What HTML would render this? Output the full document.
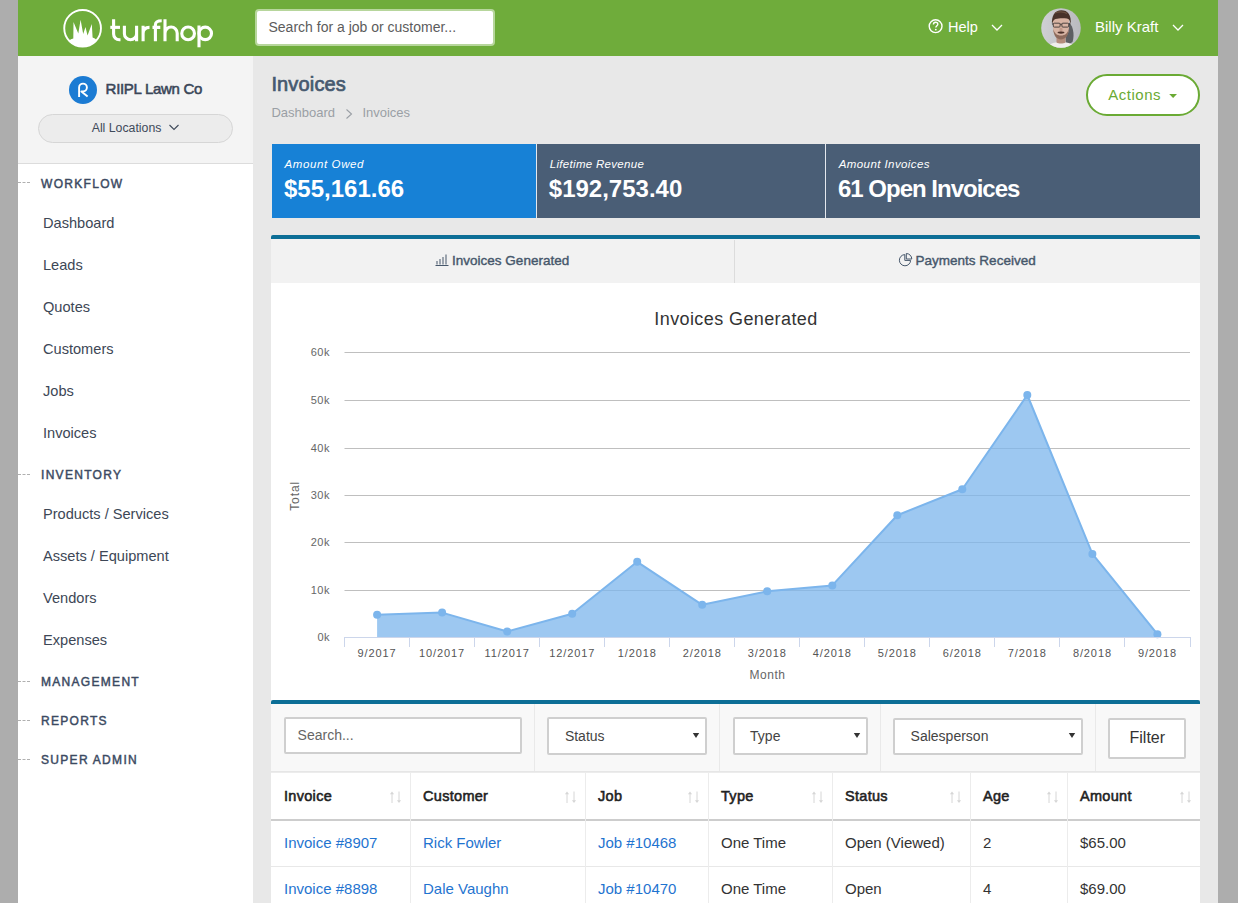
<!DOCTYPE html>
<html><head><meta charset="utf-8">
<style>
*{box-sizing:border-box;margin:0;padding:0}
html,body{width:1238px;height:903px;overflow:hidden;background:#adadad;font-family:"Liberation Sans",sans-serif}
.a{position:absolute;white-space:nowrap;line-height:1}
#hdr{position:absolute;left:18px;top:0;width:1200px;height:56px;background:#6fac3b}
#side{position:absolute;left:18px;top:56px;width:235px;height:847px;background:#fff}
#sidetop{position:absolute;left:18px;top:56px;width:235px;height:108px;background:#f4f4f4;border-bottom:1px solid #dcdcdc}
#main{position:absolute;left:253px;top:56px;width:965px;height:847px;background:#e8e8e8}
.nav{position:absolute;left:43px;font-size:14.6px;color:#3d4756}
.sec{position:absolute;left:41px;font-size:12px;font-weight:normal;letter-spacing:1.3px;color:#3b4a62;-webkit-text-stroke:0.45px #3b4a62}
.dash{position:absolute;left:18px;width:12px;height:1px;border-top:1px dashed #b0b0b0}
</style></head><body>
<!-- header -->
<div id="hdr"></div>
<svg class="a" style="left:60px;top:5px" width="46" height="46" viewBox="0 0 46 46">
 <circle cx="22.6" cy="23.3" r="18.35" fill="none" stroke="#fff" stroke-width="1.9"/>
 <clipPath id="lgc"><circle cx="22.6" cy="23.3" r="18.6"/></clipPath><path clip-path="url(#lgc)" d="M8.5 36.2 Q11 33.5 13.3 33.4 L13.5 17 L18.3 28.5 L20.6 14.8 L23.2 29 L25.5 21.9 L27.5 30.6 L31.8 19.1 L32.6 32.6 Q35 33 37 35.6 L40 46 L5 46 Z" fill="#fff"/>
</svg>
<svg class="a" style="left:0;top:0" width="230" height="56" viewBox="0 0 230 56">
 <g fill="none" stroke="#fff" stroke-width="3.1">
  <path d="M113.6 19.2 V34 A5.75 5.75 0 0 0 119.35 39.75 H120.5"/>
  <path d="M110.3 27.35 H120"/>
  <path d="M124.4 25.8 V33.65 A6.1 6.1 0 0 0 136.6 33.65 M136.6 25.8 V41.3"/>
  <path d="M143.1 41.3 V25.8 M143.1 33.5 C143.1 29.5 145.5 27.35 149.5 27.35"/>
  <path d="M155.4 41.3 V25 C155.4 21.5 157.5 20.75 161.7 20.75 M152.5 27.35 H160.3"/>
  <path d="M165 19.2 V41.3 M165 33.15 A6.1 6.1 0 0 1 177.2 33.15 V41.3"/>
  <circle cx="188.1" cy="33.4" r="6.35"/>
  <path d="M199 25.5 V47.3"/>
  <circle cx="205.25" cy="33.4" r="6.25"/>
 </g>
</svg>
<div class="a" style="left:255px;top:9px;width:240px;height:37px;background:#fff;border:2px solid #b7d69c;border-radius:4px"></div>
<div class="a" style="left:268.5px;top:20.2px;font-size:14px;color:#5c5c5c">Search for a job or customer...</div>
<svg class="a" style="left:926px;top:17px" width="20" height="20" viewBox="0 0 20 20">
 <circle cx="9.6" cy="9.2" r="6.4" fill="none" stroke="#fff" stroke-width="1.4"/>
 <path d="M7.4 7.6 C7.4 5.9 8.4 5.2 9.6 5.2 C10.9 5.2 11.8 6 11.8 7.2 C11.8 8.6 9.8 8.9 9.8 10.6" fill="none" stroke="#fff" stroke-width="1.4"/>
 <circle cx="9.8" cy="12.6" r="0.9" fill="#fff"/>
</svg>
<div class="a" style="left:948px;top:19.6px;font-size:14.5px;color:#fff">Help</div>
<svg class="a" style="left:990px;top:22px" width="14" height="10" viewBox="0 0 14 10"><path d="M2 3 L7 8 L12 3" fill="none" stroke="#fff" stroke-width="1.3"/></svg>
<svg class="a" style="left:1041px;top:8px" width="40" height="40" viewBox="0 0 40 40">
 <defs><clipPath id="cav"><circle cx="20" cy="20" r="19.8"/></clipPath><filter id="bl" x="-20%" y="-20%" width="140%" height="140%"><feGaussianBlur stdDeviation="0.45"/></filter>
 <linearGradient id="abg" x1="0" y1="0" x2="1" y2="0"><stop offset="0" stop-color="#cfd0d4"/><stop offset="1" stop-color="#b9babf"/></linearGradient></defs>
 <g clip-path="url(#cav)">
  <rect width="40" height="40" fill="url(#abg)"/>
  <g filter="url(#bl)">
   <path d="M26 13 C32 16 34 26 31.5 34 L25 38 L24 18 Z" fill="#5d5e63"/>
   <path d="M5 42 C7 36 12 34 20 34 C28 34 33 36 35 42 Z" fill="#f0eeec"/>
   <path d="M15.5 27 L15.5 34.5 C17.5 35.8 22.5 35.8 24.5 34.5 L24.5 27 Z" fill="#b48c7c"/>
   <ellipse cx="20" cy="19.8" rx="8" ry="11.2" fill="#d8b4a4"/><rect x="12" y="9" width="16" height="11" rx="3" fill="#d8b4a4"/>
   <path d="M12.3 21 C12.5 28 16 31.5 20 31.5 C24 31.5 27.5 28 27.7 21 C26.5 25.5 24 27.5 20 27.5 C16 27.5 13.5 25.5 12.3 21 Z" fill="#8d6b5c"/>
   <path d="M11 17 C10.2 7.5 14 2.2 20.3 2.2 C26.8 2.2 30.5 6.5 29.8 17 C29.2 13 28.2 11 25.8 10.6 C22 10 17.5 10.3 14.5 11 C12.5 11.6 11.6 13.8 11 17 Z" fill="#46322a"/>
   <path d="M14 5 C17 3.5 23 3.5 26 5.5" stroke="#6a5040" stroke-width="1.2" fill="none"/>
   <ellipse cx="20" cy="21.8" rx="1.6" ry="2.3" fill="#c19a8a"/>
   <ellipse cx="20" cy="24.6" rx="3.4" ry="1.1" fill="#4d322c"/>
  </g>
  <g fill="none" stroke="#2e2a2a" stroke-width="0.9" opacity="0.9">
   <rect x="12.3" y="15.2" width="6.8" height="3.9" rx="1"/>
   <rect x="20.9" y="15.2" width="6.8" height="3.9" rx="1"/>
   <path d="M19.1 16.2 H20.9 M11 16 H12.3 M27.7 16 H29"/>
  </g>
 </g>
</svg>
<div class="a" style="left:1095px;top:19.2px;font-size:15px;color:#fff">Billy Kraft</div>
<svg class="a" style="left:1171px;top:22px" width="14" height="10" viewBox="0 0 14 10"><path d="M2 3 L7 8 L12 3" fill="none" stroke="#fff" stroke-width="1.3"/></svg>

<!-- sidebar -->
<div id="side"></div>
<div id="sidetop"></div>
<div id="main"></div>

<div class="a" style="left:69px;top:76px;width:28px;height:28px;border-radius:50%;background:#1b7bd3"></div>
<svg class="a" style="left:69px;top:76px" width="28" height="28" viewBox="0 0 28 28"><path d="M10.1 21 V11.5 A3.9 3.9 0 1 1 14 15.4 H12.4 L18.6 20.6" fill="none" stroke="#fff" stroke-width="1.9" stroke-linejoin="round"/></svg>
<div class="a" style="left:105.6px;top:80.7px;font-size:15px;color:#3a4658;letter-spacing:-0.3px;-webkit-text-stroke:0.55px #3a4658">RIIPL Lawn Co</div>
<div class="a" style="left:38px;top:114px;width:195px;height:29px;border:1px solid #d6d6d6;border-radius:15px;background:#ececec"></div>
<div class="a" style="left:91.7px;top:121.8px;font-size:12.3px;color:#3f4a5a">All Locations</div>
<svg class="a" style="left:167px;top:122px" width="14" height="10" viewBox="0 0 14 10"><path d="M2.5 3 L7 7.5 L11.5 3" fill="none" stroke="#3f4a5a" stroke-width="1.1"/></svg>
<div class="dash" style="top:182.4px"></div><div class="sec a" style="top:177.7px">WORKFLOW</div>
<div class="dash" style="top:473.5px"></div><div class="sec a" style="top:468.8px">INVENTORY</div>
<div class="dash" style="top:680.6px"></div><div class="sec a" style="top:675.9px">MANAGEMENT</div>
<div class="dash" style="top:719.5px"></div><div class="sec a" style="top:714.8px">REPORTS</div>
<div class="dash" style="top:758.5px"></div><div class="sec a" style="top:753.8px">SUPER ADMIN</div>
<div class="nav a" style="top:216.4px">Dashboard</div>
<div class="nav a" style="top:258.4px">Leads</div>
<div class="nav a" style="top:300.4px">Quotes</div>
<div class="nav a" style="top:342.4px">Customers</div>
<div class="nav a" style="top:384.4px">Jobs</div>
<div class="nav a" style="top:426.4px">Invoices</div>
<div class="nav a" style="top:507.4px">Products / Services</div>
<div class="nav a" style="top:549.4px">Assets / Equipment</div>
<div class="nav a" style="top:591.4px">Vendors</div>
<div class="nav a" style="top:633.4px">Expenses</div>

<!-- main header -->
<div class="a" style="left:271.4px;top:74.1px;font-size:20px;letter-spacing:0.15px;color:#46596f;-webkit-text-stroke:0.7px #46596f">Invoices</div>
<div class="a" style="left:271.4px;top:106.2px;font-size:13px;color:#9a9fa5">Dashboard</div>
<svg class="a" style="left:343px;top:106.5px" width="12" height="14" viewBox="0 0 12 14"><path d="M3.5 2.5 L8.5 7 L3.5 11.5" fill="none" stroke="#9a9fa5" stroke-width="1.1"/></svg>
<div class="a" style="left:362.4px;top:106.2px;font-size:13px;color:#9a9fa5">Invoices</div>
<div class="a" style="left:1086px;top:74px;width:114px;height:42px;border:2px solid #6aaa34;border-radius:21px;background:#fff"></div>
<div class="a" style="left:1108.3px;top:87px;font-size:15px;letter-spacing:0.5px;color:#6aaa34">Actions</div>
<svg class="a" style="left:1168px;top:92px" width="10" height="8" viewBox="0 0 10 8"><path d="M1.2 2 H9 L5.1 6 Z" fill="#6aaa34"/></svg>

<!-- cards -->
<div class="a" style="left:272px;top:144px;width:264px;height:74px;background:#1781d6"></div>
<div class="a" style="left:536px;top:144px;width:1px;height:74px;background:#e4e8ee"></div>
<div class="a" style="left:537px;top:144px;width:288px;height:74px;background:#4a5e76"></div>
<div class="a" style="left:825px;top:144px;width:1px;height:74px;background:#e4e8ee"></div>
<div class="a" style="left:826px;top:144px;width:374px;height:74px;background:#4a5e76"></div>
<div class="a" style="left:284.6px;top:158.8px;font-size:11.5px;letter-spacing:0.6px;font-style:italic;color:#fff">Amount Owed</div>
<div class="a" style="left:284px;top:177.2px;font-size:24px;font-weight:bold;color:#fff">$55,161.66</div>
<div class="a" style="left:549.8px;top:158.8px;font-size:11.5px;letter-spacing:0.3px;font-style:italic;color:#fff">Lifetime Revenue</div>
<div class="a" style="left:548.8px;top:177.2px;font-size:24px;font-weight:bold;color:#fff">$192,753.40</div>
<div class="a" style="left:838.7px;top:158.8px;font-size:11.5px;letter-spacing:0.42px;font-style:italic;color:#fff">Amount Invoices</div>
<div class="a" style="left:838px;top:177.2px;font-size:24px;font-weight:bold;color:#fff;letter-spacing:-1px">61 Open Invoices</div>

<!-- chart panel -->
<div class="a" style="left:271px;top:235px;width:929px;height:4px;background:#0c6e96;border-radius:2px 2px 0 0"></div>
<div class="a" style="left:271px;top:239px;width:929px;height:44px;background:#f2f2f2"></div>
<div class="a" style="left:734px;top:240px;width:1px;height:43px;background:#dcdcdc"></div>
<div class="a" style="left:271px;top:283px;width:929px;height:417px;background:#fff"></div>
<svg class="a" style="left:434px;top:253px" width="16" height="14" viewBox="0 0 16 14">
 <g fill="none" stroke="#46576b" stroke-width="1"><path d="M1.5 12.5 H14.5"/><path d="M3 11.5 V8"/><path d="M6 11.5 V6"/><path d="M9 11.5 V4"/><path d="M12 11.5 V1.5"/></g>
</svg>
<div class="a" style="left:452.1px;top:253.8px;font-size:13.5px;color:#46576b;-webkit-text-stroke:0.4px #46576b">Invoices Generated</div>
<svg class="a" style="left:898px;top:252px" width="16" height="16" viewBox="0 0 16 16">
 <g fill="none" stroke="#46576b" stroke-width="1"><path d="M6.8 2.6 A5.6 5.6 0 1 0 12.6 8.4"/><path d="M8.3 1.5 V7 H13.8 A5.6 5.6 0 0 0 8.3 1.5 Z"/><path d="M6.8 2.6 V8.4 H12.6"/></g>
</svg>
<div class="a" style="left:915.6px;top:253.8px;font-size:13.5px;color:#46576b;-webkit-text-stroke:0.4px #46576b">Payments Received</div>
<svg class="a" style="left:271px;top:283px" width="929" height="417" viewBox="271 283 929 417">
<text x="736" y="325" text-anchor="middle" font-family="Liberation Sans" font-size="18" letter-spacing="0.4" fill="#333">Invoices Generated</text>
<path d="M344.5 590.5 H1190" stroke="#bfbfbf" stroke-width="1"/>
<path d="M344.5 542.5 H1190" stroke="#bfbfbf" stroke-width="1"/>
<path d="M344.5 495.5 H1190" stroke="#bfbfbf" stroke-width="1"/>
<path d="M344.5 448.5 H1190" stroke="#bfbfbf" stroke-width="1"/>
<path d="M344.5 400.5 H1190" stroke="#bfbfbf" stroke-width="1"/>
<path d="M344.5 352.5 H1190" stroke="#bfbfbf" stroke-width="1"/>
<text x="330" y="641" text-anchor="end" font-family="Liberation Sans" font-size="11" letter-spacing="0.5" fill="#666">0k</text>
<text x="330" y="594" text-anchor="end" font-family="Liberation Sans" font-size="11" letter-spacing="0.5" fill="#666">10k</text>
<text x="330" y="546" text-anchor="end" font-family="Liberation Sans" font-size="11" letter-spacing="0.5" fill="#666">20k</text>
<text x="330" y="499" text-anchor="end" font-family="Liberation Sans" font-size="11" letter-spacing="0.5" fill="#666">30k</text>
<text x="330" y="452" text-anchor="end" font-family="Liberation Sans" font-size="11" letter-spacing="0.5" fill="#666">40k</text>
<text x="330" y="404" text-anchor="end" font-family="Liberation Sans" font-size="11" letter-spacing="0.5" fill="#666">50k</text>
<text x="330" y="356" text-anchor="end" font-family="Liberation Sans" font-size="11" letter-spacing="0.5" fill="#666">60k</text>
<path d="M377.1 637 L377.1 614.8 L442.1 612.6 L507.2 631.5 L572.2 613.7 L637.2 561.8 L702.2 604.8 L767.2 591.3 L832.3 585.4 L897.3 515.2 L962.3 489.2 L1027.3 395.0 L1092.4 553.9 L1157.4 634.2 L1157.4 637 Z" fill="#7cb5ec" fill-opacity="0.75"/>
<path d="M377.1 614.8 L442.1 612.6 L507.2 631.5 L572.2 613.7 L637.2 561.8 L702.2 604.8 L767.2 591.3 L832.3 585.4 L897.3 515.2 L962.3 489.2 L1027.3 395.0 L1092.4 553.9 L1157.4 634.2" fill="none" stroke="#7cb5ec" stroke-width="2" stroke-linejoin="round"/>
<circle cx="377.1" cy="614.8" r="4" fill="#7cb5ec"/>
<circle cx="442.1" cy="612.6" r="4" fill="#7cb5ec"/>
<circle cx="507.2" cy="631.5" r="4" fill="#7cb5ec"/>
<circle cx="572.2" cy="613.7" r="4" fill="#7cb5ec"/>
<circle cx="637.2" cy="561.8" r="4" fill="#7cb5ec"/>
<circle cx="702.2" cy="604.8" r="4" fill="#7cb5ec"/>
<circle cx="767.2" cy="591.3" r="4" fill="#7cb5ec"/>
<circle cx="832.3" cy="585.4" r="4" fill="#7cb5ec"/>
<circle cx="897.3" cy="515.2" r="4" fill="#7cb5ec"/>
<circle cx="962.3" cy="489.2" r="4" fill="#7cb5ec"/>
<circle cx="1027.3" cy="395.0" r="4" fill="#7cb5ec"/>
<circle cx="1092.4" cy="553.9" r="4" fill="#7cb5ec"/>
<circle cx="1157.4" cy="634.2" r="4" fill="#7cb5ec"/>
<path d="M344 637.5 H1191" stroke="#ccd6eb" stroke-width="1"/>
<path d="M344.5 637 V647" stroke="#ccd6eb" stroke-width="1"/>
<path d="M409.5 637 V647" stroke="#ccd6eb" stroke-width="1"/>
<path d="M474.5 637 V647" stroke="#ccd6eb" stroke-width="1"/>
<path d="M539.5 637 V647" stroke="#ccd6eb" stroke-width="1"/>
<path d="M604.5 637 V647" stroke="#ccd6eb" stroke-width="1"/>
<path d="M669.5 637 V647" stroke="#ccd6eb" stroke-width="1"/>
<path d="M734.5 637 V647" stroke="#ccd6eb" stroke-width="1"/>
<path d="M799.5 637 V647" stroke="#ccd6eb" stroke-width="1"/>
<path d="M864.5 637 V647" stroke="#ccd6eb" stroke-width="1"/>
<path d="M929.5 637 V647" stroke="#ccd6eb" stroke-width="1"/>
<path d="M994.5 637 V647" stroke="#ccd6eb" stroke-width="1"/>
<path d="M1059.5 637 V647" stroke="#ccd6eb" stroke-width="1"/>
<path d="M1124.5 637 V647" stroke="#ccd6eb" stroke-width="1"/>
<path d="M1190.5 637 V647" stroke="#ccd6eb" stroke-width="1"/>
<text x="377.1" y="657" text-anchor="middle" font-family="Liberation Sans" font-size="11" letter-spacing="0.9" fill="#555">9/2017</text>
<text x="442.1" y="657" text-anchor="middle" font-family="Liberation Sans" font-size="11" letter-spacing="0.9" fill="#555">10/2017</text>
<text x="507.2" y="657" text-anchor="middle" font-family="Liberation Sans" font-size="11" letter-spacing="0.9" fill="#555">11/2017</text>
<text x="572.2" y="657" text-anchor="middle" font-family="Liberation Sans" font-size="11" letter-spacing="0.9" fill="#555">12/2017</text>
<text x="637.2" y="657" text-anchor="middle" font-family="Liberation Sans" font-size="11" letter-spacing="0.9" fill="#555">1/2018</text>
<text x="702.2" y="657" text-anchor="middle" font-family="Liberation Sans" font-size="11" letter-spacing="0.9" fill="#555">2/2018</text>
<text x="767.2" y="657" text-anchor="middle" font-family="Liberation Sans" font-size="11" letter-spacing="0.9" fill="#555">3/2018</text>
<text x="832.3" y="657" text-anchor="middle" font-family="Liberation Sans" font-size="11" letter-spacing="0.9" fill="#555">4/2018</text>
<text x="897.3" y="657" text-anchor="middle" font-family="Liberation Sans" font-size="11" letter-spacing="0.9" fill="#555">5/2018</text>
<text x="962.3" y="657" text-anchor="middle" font-family="Liberation Sans" font-size="11" letter-spacing="0.9" fill="#555">6/2018</text>
<text x="1027.3" y="657" text-anchor="middle" font-family="Liberation Sans" font-size="11" letter-spacing="0.9" fill="#555">7/2018</text>
<text x="1092.4" y="657" text-anchor="middle" font-family="Liberation Sans" font-size="11" letter-spacing="0.9" fill="#555">8/2018</text>
<text x="1157.4" y="657" text-anchor="middle" font-family="Liberation Sans" font-size="11" letter-spacing="0.9" fill="#555">9/2018</text>
<text x="767.5" y="678.8" text-anchor="middle" font-family="Liberation Sans" font-size="12" letter-spacing="0.5" fill="#666">Month</text>
<text transform="translate(299 495.9) rotate(-90)" x="0" y="0" text-anchor="middle" font-family="Liberation Sans" font-size="12" letter-spacing="0.9" fill="#666">Total</text>
</svg>

<!-- table panel -->
<div class="a" style="left:271px;top:700px;width:929px;height:4px;background:#0c6e96;border-radius:2px 2px 0 0"></div>
<div class="a" style="left:271px;top:704px;width:929px;height:199px;background:#fff"></div>
<div class="a" style="left:271px;top:704px;width:929px;height:68px;background:#f8f8f8;border-bottom:1px solid #e6e6e6"></div>
<div class="a" style="left:534px;top:704px;width:1px;height:67px;background:#e9e9e9"></div>
<div class="a" style="left:719px;top:704px;width:1px;height:67px;background:#e9e9e9"></div>
<div class="a" style="left:880px;top:704px;width:1px;height:67px;background:#e9e9e9"></div>
<div class="a" style="left:1095px;top:704px;width:1px;height:67px;background:#e9e9e9"></div>
<div class="a" style="left:284px;top:717px;width:238px;height:37px;background:#fff;border:2px solid #cfcfcf;border-radius:2px"></div>
<div class="a" style="left:297.6px;top:727.9px;font-size:14px;color:#666">Search...</div>
<div class="a" style="left:547px;top:717px;width:160px;height:38px;background:#fff;border:2px solid #cfcfcf;border-radius:2px"></div>
<div class="a" style="left:564.9px;top:728.5px;font-size:14px;color:#444">Status</div>
<svg class="a" style="left:692px;top:732px" width="8" height="7" viewBox="0 0 8 7"><path d="M0.8 1 H7.2 L4 6 Z" fill="#333"/></svg>
<div class="a" style="left:733px;top:717px;width:135px;height:38px;background:#fff;border:2px solid #cfcfcf;border-radius:2px"></div>
<div class="a" style="left:750.1px;top:728.5px;font-size:14px;color:#444">Type</div>
<svg class="a" style="left:853px;top:732px" width="8" height="7" viewBox="0 0 8 7"><path d="M0.8 1 H7.2 L4 6 Z" fill="#333"/></svg>
<div class="a" style="left:893px;top:718px;width:190px;height:37px;background:#fff;border:2px solid #cfcfcf;border-radius:2px"></div>
<div class="a" style="left:910.6px;top:728.5px;font-size:14px;color:#444">Salesperson</div>
<svg class="a" style="left:1068px;top:732px" width="8" height="7" viewBox="0 0 8 7"><path d="M0.8 1 H7.2 L4 6 Z" fill="#333"/></svg>
<div class="a" style="left:1108px;top:718px;width:78px;height:41px;background:#fff;border:2px solid #cfcfcf;border-radius:2px"></div>
<div class="a" style="left:1129.5px;top:729.9px;font-size:16px;color:#333">Filter</div>
<div class="a" style="left:271px;top:772px;width:929px;height:1px;background:#ececec"></div>
<div class="a" style="left:271px;top:819px;width:929px;height:2px;background:#cdcdcd"></div>
<div class="a" style="left:271px;top:866px;width:929px;height:1px;background:#e8e8e8"></div>
<div class="a" style="left:410px;top:773px;width:1px;height:130px;background:#ececec"></div>
<div class="a" style="left:585px;top:773px;width:1px;height:130px;background:#ececec"></div>
<div class="a" style="left:708px;top:773px;width:1px;height:130px;background:#ececec"></div>
<div class="a" style="left:832px;top:773px;width:1px;height:130px;background:#ececec"></div>
<div class="a" style="left:970px;top:773px;width:1px;height:130px;background:#ececec"></div>
<div class="a" style="left:1067px;top:773px;width:1px;height:130px;background:#ececec"></div>
<div class="a" style="left:284px;top:788.8px;font-size:14.5px;letter-spacing:0.3px;color:#222;-webkit-text-stroke:0.55px #222">Invoice</div>
<svg class="a" style="left:389px;top:790px" width="14" height="14" viewBox="0 0 14 14"><g stroke="#d6d6d6" stroke-width="1" fill="#d6d6d6"><path d="M3 13 V3.5"/><path d="M0.9 4.3 L3 1.6 L5.1 4.3 Z" stroke="none"/><path d="M10 1.5 V11"/><path d="M7.9 10.2 L10 12.9 L12.1 10.2 Z" stroke="none"/></g></svg>
<div class="a" style="left:423px;top:788.8px;font-size:14.5px;letter-spacing:0.3px;color:#222;-webkit-text-stroke:0.55px #222">Customer</div>
<svg class="a" style="left:564px;top:790px" width="14" height="14" viewBox="0 0 14 14"><g stroke="#d6d6d6" stroke-width="1" fill="#d6d6d6"><path d="M3 13 V3.5"/><path d="M0.9 4.3 L3 1.6 L5.1 4.3 Z" stroke="none"/><path d="M10 1.5 V11"/><path d="M7.9 10.2 L10 12.9 L12.1 10.2 Z" stroke="none"/></g></svg>
<div class="a" style="left:598px;top:788.8px;font-size:14.5px;letter-spacing:0.3px;color:#222;-webkit-text-stroke:0.55px #222">Job</div>
<svg class="a" style="left:687px;top:790px" width="14" height="14" viewBox="0 0 14 14"><g stroke="#d6d6d6" stroke-width="1" fill="#d6d6d6"><path d="M3 13 V3.5"/><path d="M0.9 4.3 L3 1.6 L5.1 4.3 Z" stroke="none"/><path d="M10 1.5 V11"/><path d="M7.9 10.2 L10 12.9 L12.1 10.2 Z" stroke="none"/></g></svg>
<div class="a" style="left:721px;top:788.8px;font-size:14.5px;letter-spacing:0.3px;color:#222;-webkit-text-stroke:0.55px #222">Type</div>
<svg class="a" style="left:811px;top:790px" width="14" height="14" viewBox="0 0 14 14"><g stroke="#d6d6d6" stroke-width="1" fill="#d6d6d6"><path d="M3 13 V3.5"/><path d="M0.9 4.3 L3 1.6 L5.1 4.3 Z" stroke="none"/><path d="M10 1.5 V11"/><path d="M7.9 10.2 L10 12.9 L12.1 10.2 Z" stroke="none"/></g></svg>
<div class="a" style="left:845px;top:788.8px;font-size:14.5px;letter-spacing:0.3px;color:#222;-webkit-text-stroke:0.55px #222">Status</div>
<svg class="a" style="left:949px;top:790px" width="14" height="14" viewBox="0 0 14 14"><g stroke="#d6d6d6" stroke-width="1" fill="#d6d6d6"><path d="M3 13 V3.5"/><path d="M0.9 4.3 L3 1.6 L5.1 4.3 Z" stroke="none"/><path d="M10 1.5 V11"/><path d="M7.9 10.2 L10 12.9 L12.1 10.2 Z" stroke="none"/></g></svg>
<div class="a" style="left:983px;top:788.8px;font-size:14.5px;letter-spacing:0.3px;color:#222;-webkit-text-stroke:0.55px #222">Age</div>
<svg class="a" style="left:1046px;top:790px" width="14" height="14" viewBox="0 0 14 14"><g stroke="#d6d6d6" stroke-width="1" fill="#d6d6d6"><path d="M3 13 V3.5"/><path d="M0.9 4.3 L3 1.6 L5.1 4.3 Z" stroke="none"/><path d="M10 1.5 V11"/><path d="M7.9 10.2 L10 12.9 L12.1 10.2 Z" stroke="none"/></g></svg>
<div class="a" style="left:1080px;top:788.8px;font-size:14.5px;letter-spacing:0.3px;color:#222;-webkit-text-stroke:0.55px #222">Amount</div>
<svg class="a" style="left:1179px;top:790px" width="14" height="14" viewBox="0 0 14 14"><g stroke="#d6d6d6" stroke-width="1" fill="#d6d6d6"><path d="M3 13 V3.5"/><path d="M0.9 4.3 L3 1.6 L5.1 4.3 Z" stroke="none"/><path d="M10 1.5 V11"/><path d="M7.9 10.2 L10 12.9 L12.1 10.2 Z" stroke="none"/></g></svg>
<div class="a" style="left:284px;top:834.8px;font-size:15px;color:#1f74d0">Invoice #8907</div>
<div class="a" style="left:423px;top:834.8px;font-size:15px;color:#1f74d0">Rick Fowler</div>
<div class="a" style="left:598px;top:834.8px;font-size:15px;color:#1f74d0">Job #10468</div>
<div class="a" style="left:721px;top:834.8px;font-size:15px;color:#333">One Time</div>
<div class="a" style="left:845px;top:834.8px;font-size:15px;color:#333">Open (Viewed)</div>
<div class="a" style="left:983px;top:834.8px;font-size:15px;color:#333">2</div>
<div class="a" style="left:1080px;top:834.8px;font-size:15px;color:#333">$65.00</div>
<div class="a" style="left:284px;top:881.4px;font-size:15px;color:#1f74d0">Invoice #8898</div>
<div class="a" style="left:423px;top:881.4px;font-size:15px;color:#1f74d0">Dale Vaughn</div>
<div class="a" style="left:598px;top:881.4px;font-size:15px;color:#1f74d0">Job #10470</div>
<div class="a" style="left:721px;top:881.4px;font-size:15px;color:#333">One Time</div>
<div class="a" style="left:845px;top:881.4px;font-size:15px;color:#333">Open</div>
<div class="a" style="left:983px;top:881.4px;font-size:15px;color:#333">4</div>
<div class="a" style="left:1080px;top:881.4px;font-size:15px;color:#333">$69.00</div>
</body></html>
